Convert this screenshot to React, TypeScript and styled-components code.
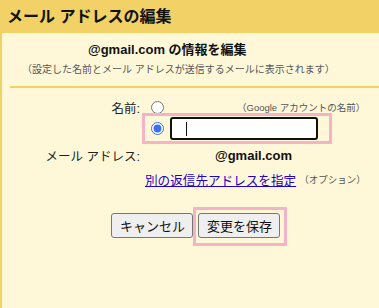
import React from 'react';
import styled, { createGlobalStyle } from 'styled-components';

const GlobalStyle = createGlobalStyle`
  html, body {
    margin: 0;
    padding: 0;
    background: #fef8d9;
  }

  body {
    color: #222;
    font-family: 'Liberation Sans', 'Noto Sans CJK JP', sans-serif;
  }
`;

const YELLOW = '#f2d166';
const PINK = '#f4b4c8';

const Dialog = styled.div`
  width: 379px;
  height: 308px;
  display: flex;
  flex-direction: column;
  overflow: hidden;
`;

const Header = styled.div`
  background: ${YELLOW};
  color: #111;
  font-size: 16px;
  font-weight: bold;
  height: 33px;
  line-height: 34px;
  padding-left: 7px;
  white-space: nowrap;
`;

const Panel = styled.div`
  border-left: 2px solid ${YELLOW};
  display: flex;
  flex: 1;
  flex-direction: column;
`;

const Title = styled.div`
  color: #111;
  font-size: 13px;
  font-weight: bold;
  line-height: 16px;
  margin-top: 9px;
  padding-left: 86px;
  white-space: nowrap;
`;

const Subtitle = styled.div`
  color: #555;
  font-size: 10px;
  line-height: 14px;
  margin-top: 5px;
  padding-left: 20px;
  white-space: nowrap;
`;

const Divider = styled.div`
  background: ${YELLOW};
  height: 2px;
  margin: 9px 0 0 8px;
`;

const Row = styled.div<{ $top: number; $height: number }>`
  align-items: center;
  display: flex;
  height: ${(p) => p.$height}px;
  margin-top: ${(p) => p.$top}px;
  white-space: nowrap;
`;

const Label = styled.div`
  flex: 0 0 138px;
  font-size: 12.5px;
  text-align: right;
`;

const Radio = styled.input.attrs({ type: 'radio' })<{ $left?: number }>`
  accent-color: #3e6ff0;
  height: 13px;
  margin: 0 0 0 ${(p) => p.$left ?? 0}px;
  width: 13px;
`;

const Note = styled.span<{ $left: number }>`
  color: #555;
  font-size: 9.5px;
  margin-left: ${(p) => p.$left}px;
`;

const Highlight = styled.div<{ $pad: string }>`
  border: 3px solid ${PINK};
  display: flex;
  align-items: flex-start;
  padding: ${(p) => p.$pad};
`;

const NameBox = styled(Highlight)`
  align-items: center;
  gap: 6px;
  margin-left: 140px;
  width: 167px;
`;

const TextField = styled.div`
  align-items: center;
  background: #fff;
  border: 2px solid #111;
  border-radius: 3px;
  box-sizing: border-box;
  display: flex;
  height: 23px;
  padding-left: 14px;
  width: 148px;
`;

const Caret = styled.span`
  background: #111;
  height: 14px;
  width: 1px;
`;

const Address = styled.span`
  color: #111;
  font-size: 13px;
  font-weight: bold;
  margin-left: 75px;
`;

const Link = styled.a`
  color: #2200cc;
  font-size: 12.6px;
  margin-left: 143px;
  text-decoration: underline;
`;

const Buttons = styled.div`
  align-items: flex-start;
  display: flex;
  margin: 20px 0 0 109px;
`;

const Button = styled.button<{ $top?: number }>`
  background: #efefef;
  border: 1px solid #767676;
  border-radius: 3px;
  color: #111;
  font-family: inherit;
  font-size: 13px;
  height: 25px;
  margin-top: ${(p) => p.$top ?? 0}px;
  padding: 0 8px;
  width: 82px;
  white-space: nowrap;
`;

export default function App () {
  return (
    <>
      <GlobalStyle />
      <Dialog>
        <Header>メール アドレスの編集</Header>
        <Panel>
          <Title>@gmail.com の情報を編集</Title>
          <Subtitle>（設定した名前とメール アドレスが送信するメールに表示されます）</Subtitle>
          <Divider />
          <Row $top={12} $height={14}>
            <Label>名前:</Label>
            <Radio $left={11} name='name' />
            <Note $left={73}>（Google アカウントの名前）</Note>
          </Row>
          <Row $top={-1} $height={31}>
            <NameBox $pad='1px 11px 1px 6px'>
              <Radio defaultChecked name='name' />
              <TextField>
                <Caret />
              </TextField>
            </NameBox>
          </Row>
          <Row $top={3} $height={16}>
            <Label>メール アドレス:</Label>
            <Address>@gmail.com</Address>
          </Row>
          <Row $top={8} $height={16}>
            <Link href='#'>別の返信先アドレスを指定</Link>
            <Note $left={3}>（オプション）</Note>
          </Row>
          <Buttons>
            <Button $top={6}>キャンセル</Button>
            <Highlight $pad='3px 4px 5px 2px'>
              <Button>変更を保存</Button>
            </Highlight>
          </Buttons>
        </Panel>
      </Dialog>
    </>
  );
}
